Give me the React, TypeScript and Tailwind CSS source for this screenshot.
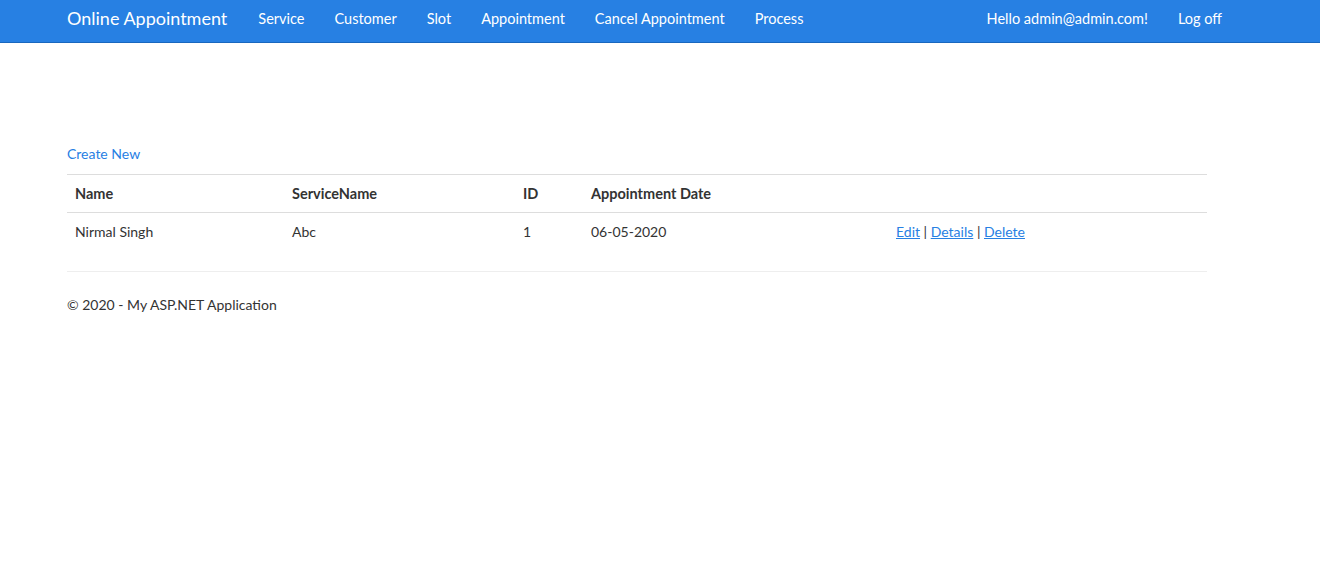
const navLinks = ['Service', 'Customer', 'Slot', 'Appointment', 'Cancel Appointment', 'Process'];

const rows = [
    { name: 'Nirmal Singh', service: 'Abc', id: 1, date: '06-05-2020' },
];

const App = () => {
    return (
        <div className="min-h-screen bg-white text-[14px] leading-[21px] text-[#333]" style={{ fontFamily: 'Lato, "Open Sans", sans-serif' }}>
            <nav className="h-[43px] bg-[#2780e3] border-b border-[#1967be]">
                <div className="ml-[52px] w-[1185px] pt-[7px] flex items-center justify-between text-white text-[14.5px]">
                    <div className="flex items-center">
                        <a className="pl-[15px] pr-[16px] text-[18px] leading-[22px]">Online Appointment</a>
                        {navLinks.map((link) => (
                            <a key={link} className="px-[15px]">{link}</a>
                        ))}
                    </div>
                    <div className="flex items-center">
                        <a className="px-[15px]">Hello admin@admin.com!</a>
                        <a className="px-[15px]">Log off</a>
                    </div>
                </div>
            </nav>
            <div className="ml-[67px] w-[1140px] pt-[100px]">
                <p className="mb-[10px]">
                    <a className="text-[#2780e3]">Create New</a>
                </p>
                <table className="w-full border-collapse mb-[20px]">
                    <thead>
                        <tr className="border-t border-b border-[#ddd] text-left text-[14.5px]">
                            <th className="w-[217px] p-2 font-bold">Name</th>
                            <th className="w-[231px] p-2 font-bold">ServiceName</th>
                            <th className="w-[68px] p-2 font-bold">ID</th>
                            <th className="w-[305px] p-2 font-bold">Appointment Date</th>
                            <th className="p-2"></th>
                        </tr>
                    </thead>
                    <tbody>
                        {rows.map((row) => (
                            <tr key={row.id}>
                                <td className="p-2">{row.name}</td>
                                <td className="p-2">{row.service}</td>
                                <td className="p-2">{row.id}</td>
                                <td className="p-2">{row.date}</td>
                                <td className="p-2">
                                    <a className="text-[#2780e3] underline">Edit</a> |{' '}
                                    <a className="text-[#2780e3] underline">Details</a> |{' '}
                                    <a className="text-[#2780e3] underline">Delete</a>
                                </td>
                            </tr>
                        ))}
                    </tbody>
                </table>
                <hr className="border-t border-[#eee] mt-[21px]" />
                <footer className="mt-[22px]">
                    <p>&copy; 2020 - My ASP.NET Application</p>
                </footer>
            </div>
        </div>
    );
};

export default App;
